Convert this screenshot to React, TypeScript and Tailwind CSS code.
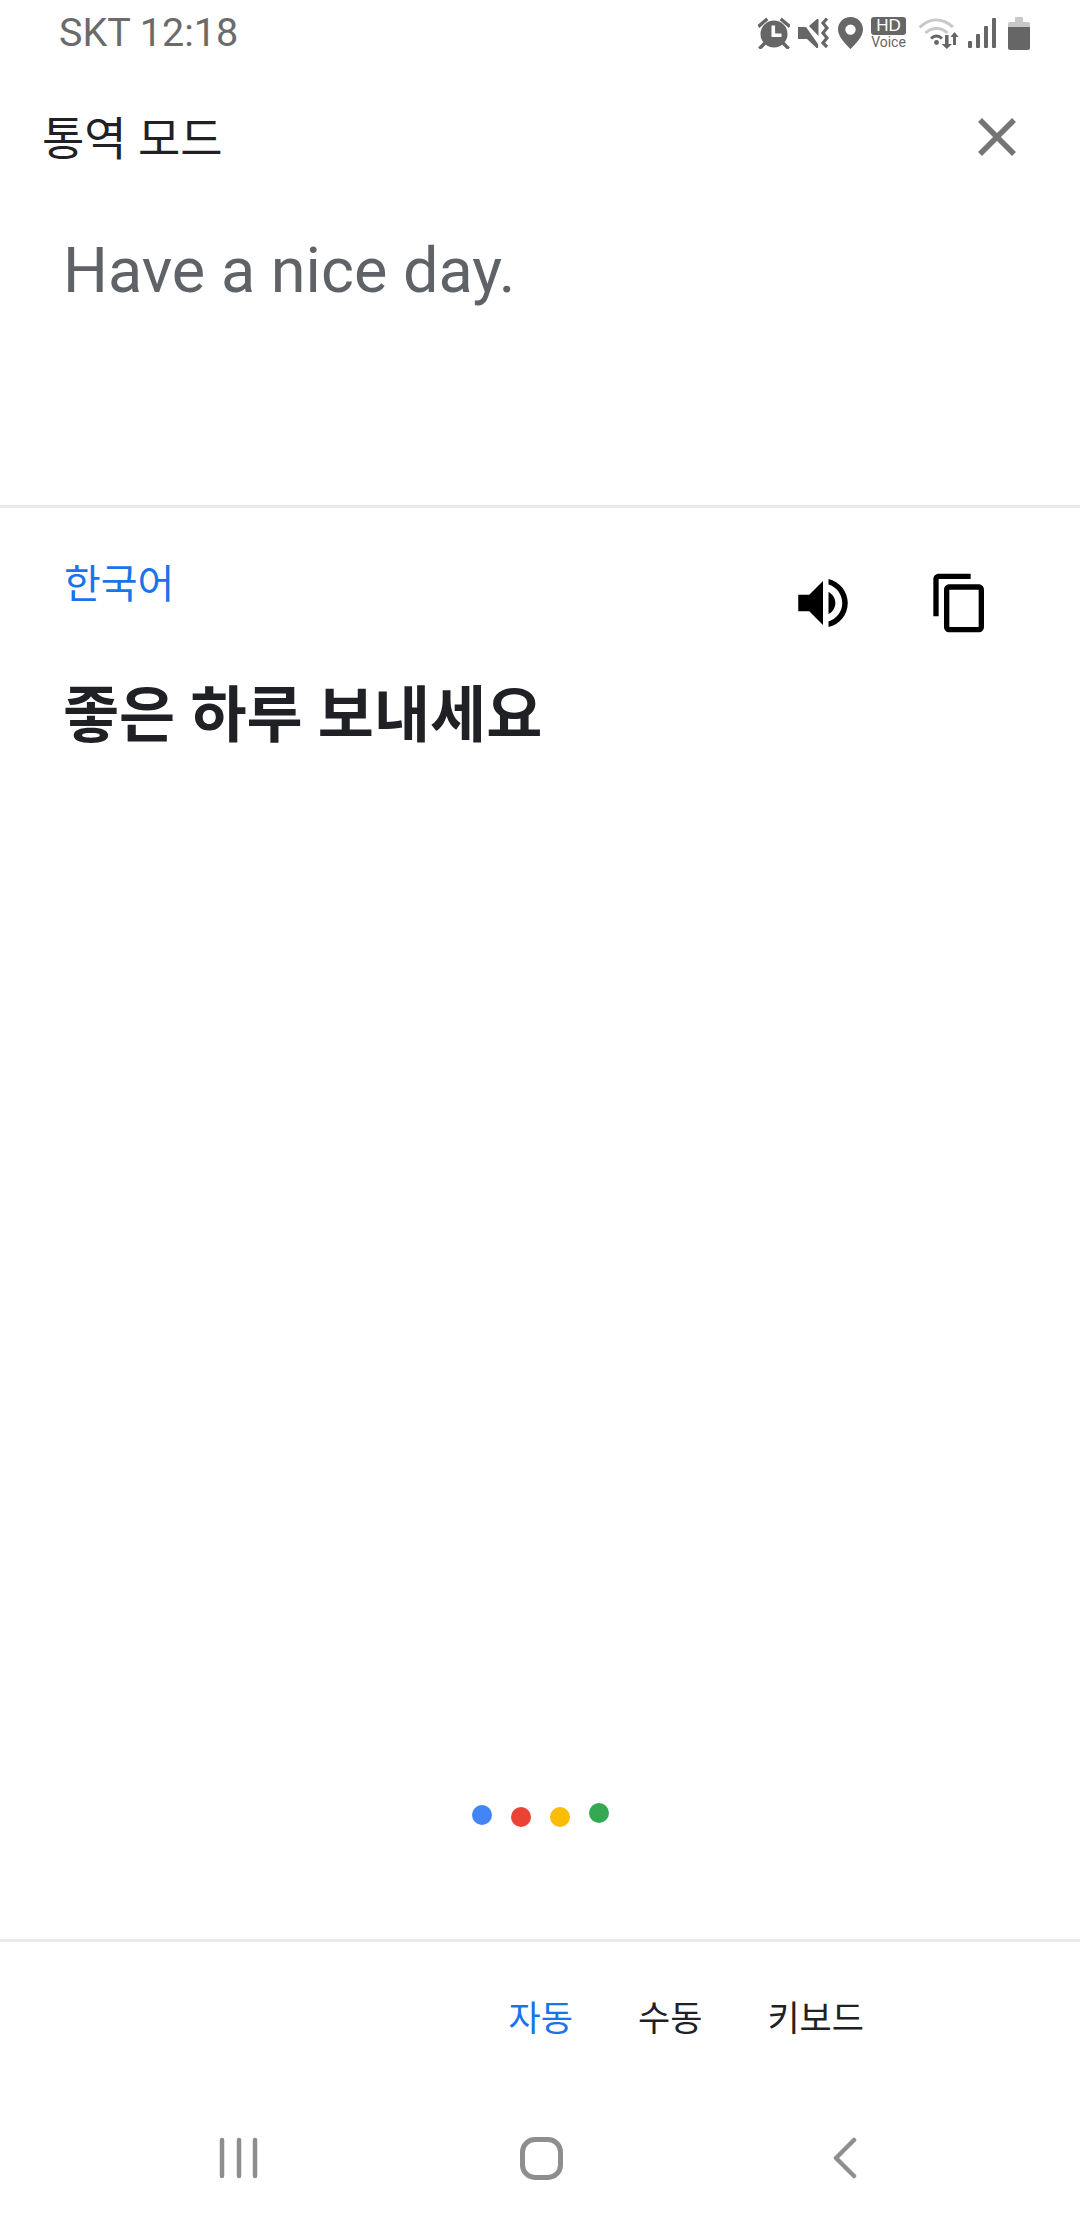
const KR = "font-['Roboto','Noto_Sans_CJK_KR',sans-serif]";

const AlarmIcon = () => (
  <svg width="32" height="32" viewBox="0 0 32 32" fill="#666666">
    <circle cx="16" cy="17" r="13.5" />
    <path d="M1.5 8.5 8 3M30.5 8.5 24 3M6 27l-3.5 3.5M26 27l3.5 3.5" stroke="#666666" strokeWidth="3.4" strokeLinecap="square" fill="none" />
    <path d="M13.5 8.5h3.6V16.5h6.4v3.6h-10z" fill="#ffffff" />
  </svg>
);

const MuteIcon = () => (
  <svg width="31" height="32" viewBox="0 0 31 32" fill="#666666">
    <path d="M0 10h8l12 17v4h-1.5L9 22H0zM11 9l8-7h1.5v17z" />
    <path d="M29 1.5l-4 4.5 4 5-4 5 4 5-4 5 4 4" fill="none" stroke="#666666" strokeWidth="3.2" />
  </svg>
);

const PinIcon = () => (
  <svg width="25" height="32" viewBox="0 0 25 32" fill="#666666">
    <path fillRule="evenodd" d="M12.5 0C5.6 0 0 5.5 0 12.4 0 20 8 27 12.5 32 17 27 25 20 25 12.4 25 5.5 19.4 0 12.5 0zm0 7.4a5.2 5.2 0 1 1 0 10.4 5.2 5.2 0 0 1 0-10.4z" />
  </svg>
);

const WifiIcon = () => (
  <svg width="43" height="31" viewBox="0 0 43 31" fill="none">
    <path d="M1.5 9.5C12 -0.5 24 -0.5 35 9" stroke="#c8c8c8" strokeWidth="3" />
    <path d="M7.5 15C14 9 23 9 29.5 15" stroke="#c8c8c8" strokeWidth="3" />
    <path d="M13 20.5c3.5-3.5 7.5-3.5 11 0" stroke="#666666" strokeWidth="3" />
    <circle cx="18.5" cy="24.5" r="2.4" fill="#666666" />
    <path d="M27 17h3.6v9H34l-5.2 5-5.2-5H27zM38 27h-3v-8h-2.6l4.1-5 4.1 5H38z" fill="#666666" />
  </svg>
);

const SignalIcon = () => (
  <svg width="28" height="31" viewBox="0 0 28 31" fill="#666666">
    <rect x="0" y="23" width="4" height="7" rx="1" />
    <rect x="8" y="16" width="4" height="14" rx="1" />
    <rect x="16" y="8" width="4" height="22" rx="1" />
    <rect x="24" y="0" width="4" height="30" rx="1" />
  </svg>
);

const BatteryIcon = () => (
  <svg width="22" height="33" viewBox="0 0 22 33">
    <path d="M7 0h8v5h5a2 2 0 0 1 2 2v4H0V7a2 2 0 0 1 2-2h5z" fill="#c8c8c8" />
    <path d="M0 10h22v21a2 2 0 0 1-2 2H2a2 2 0 0 1-2-2z" fill="#666666" />
  </svg>
);

const StatusBar = () => (
  <div className="flex h-[66px] items-center justify-between pl-[59px] pr-[50px]">
    <span className="text-[39.5px] leading-none text-[#6b6b6b] font-['Roboto',sans-serif]">SKT 12:18</span>
    <div className="flex items-center">
      <AlarmIcon />
      <span className="ml-[8px]"><MuteIcon /></span>
      <span className="ml-[9px]"><PinIcon /></span>
      <div className="ml-[8px] flex w-[35px] flex-col items-center">
        <div className="h-[18px] w-[35px] rounded-[3px] bg-[#666666] text-center text-[17px] leading-[18px] text-white font-['Liberation_Sans',sans-serif]">HD</div>
        <div className="text-[14px] leading-[15px] text-[#666666] font-['Roboto',sans-serif]">Voice</div>
      </div>
      <span className="ml-[12px]"><WifiIcon /></span>
      <span className="ml-[7px]"><SignalIcon /></span>
      <span className="ml-[12px]"><BatteryIcon /></span>
    </div>
  </div>
);

const Header = () => (
  <div className="flex h-[142px] items-center justify-between pl-[42px] pr-[64px]">
    <span className={`${KR} mt-[4px] text-[46px] leading-none text-[#202124]`}>통역 모드</span>
    <svg width="38" height="38" viewBox="0 0 38 38" stroke="#757575" strokeWidth="5.5" fill="none">
      <path d="M2 2l34 34M36 2L2 36" />
    </svg>
  </div>
);

const Dot = ({ className }: { className: string }) => (
  <div className={`h-[20px] w-[20px] rounded-full ${className}`} />
);

const Tab = ({ label, active }: { label: string; active?: boolean }) => (
  <span className={`${KR} text-[35px] leading-none ${active ? "text-[#1a73e8]" : "text-[#202124]"}`}>{label}</span>
);

export default function App() {
  return (
    <div className="flex h-[2220px] w-[1080px] flex-col bg-white">
      <StatusBar />
      <Header />
      {/* source text */}
      <div className="h-[297px] pl-[63px] pt-[23px]">
        <p className="text-[63px] leading-[80px] text-[#5f6368] font-['Roboto',sans-serif]">Have a nice day.</p>
      </div>
      <div className="h-[3px] bg-[#e8eaed]" />
      {/* translation */}
      <div className="flex-1">
        <div className="flex items-start justify-between pl-[64px] pr-[88px] pt-[52px]">
          <span className={`${KR} text-[40px] leading-[50px] text-[#1a73e8]`}>한국어</span>
          <div className="flex items-center gap-[72px] pt-[10px]">
            <svg width="66" height="66" viewBox="0 0 24 24" fill="#000000">
              <path d="M3 9v6h4l5 5V4L7 9H3zm13.5 3c0-1.77-1.02-3.29-2.5-4.03v8.05c1.48-.73 2.5-2.25 2.5-4.02zM14 3.23v2.06c2.89.86 5 3.54 5 6.71s-2.11 5.85-5 6.71v2.06c4.01-.91 7-4.49 7-8.77s-2.99-7.86-7-8.77z" />
            </svg>
            <svg width="64" height="64" viewBox="0 0 24 24" fill="#000000">
              <path d="M16 1H4c-1.1 0-2 .9-2 2v14h2V3h12V1zm3 4H8c-1.1 0-2 .9-2 2v14c0 1.1.9 2 2 2h11c1.1 0 2-.9 2-2V7c0-1.1-.9-2-2-2zm0 16H8V7h11v14z" />
            </svg>
          </div>
        </div>
        <p className={`${KR} pl-[63px] pt-[40px] text-[61px] font-bold leading-[80px] text-[#202124]`}>좋은 하루 보내세요</p>
      </div>
      {/* thinking dots */}
      <div className="flex items-start justify-center gap-[19px] pb-[112px]">
        <Dot className="mt-[2px] bg-[#4285f4]" />
        <Dot className="mt-[4px] bg-[#ea4335]" />
        <Dot className="mt-[4px] bg-[#fbbc04]" />
        <Dot className="bg-[#34a853]" />
      </div>
      <div className="h-[3px] bg-[#e8eaed]" />
      <div className="flex h-[155px] items-center justify-end gap-[65px] pr-[216px]">
        <Tab label="자동" active />
        <Tab label="수동" />
        <Tab label="키보드" />
      </div>
      {/* android nav */}
      <div className="flex h-[123px] items-start justify-between pl-[219px] pr-[222px] pt-[40px]">
        <svg width="40" height="42" viewBox="0 0 40 42" stroke="#8e8e8e" strokeWidth="4.5" strokeLinecap="round">
          <path d="M3 3v36M20 3v36M36 3v36" />
        </svg>
        <div className="mr-[8px] h-[43px] w-[43px] rounded-[15px] border-[5px] border-[#8e8e8e]" />
        <svg width="26" height="42" viewBox="0 0 26 42" stroke="#8e8e8e" strokeWidth="4.5" fill="none" strokeLinecap="round" strokeLinejoin="round">
          <path d="M22 3L4 21l18 18" />
        </svg>
      </div>
    </div>
  );
}
